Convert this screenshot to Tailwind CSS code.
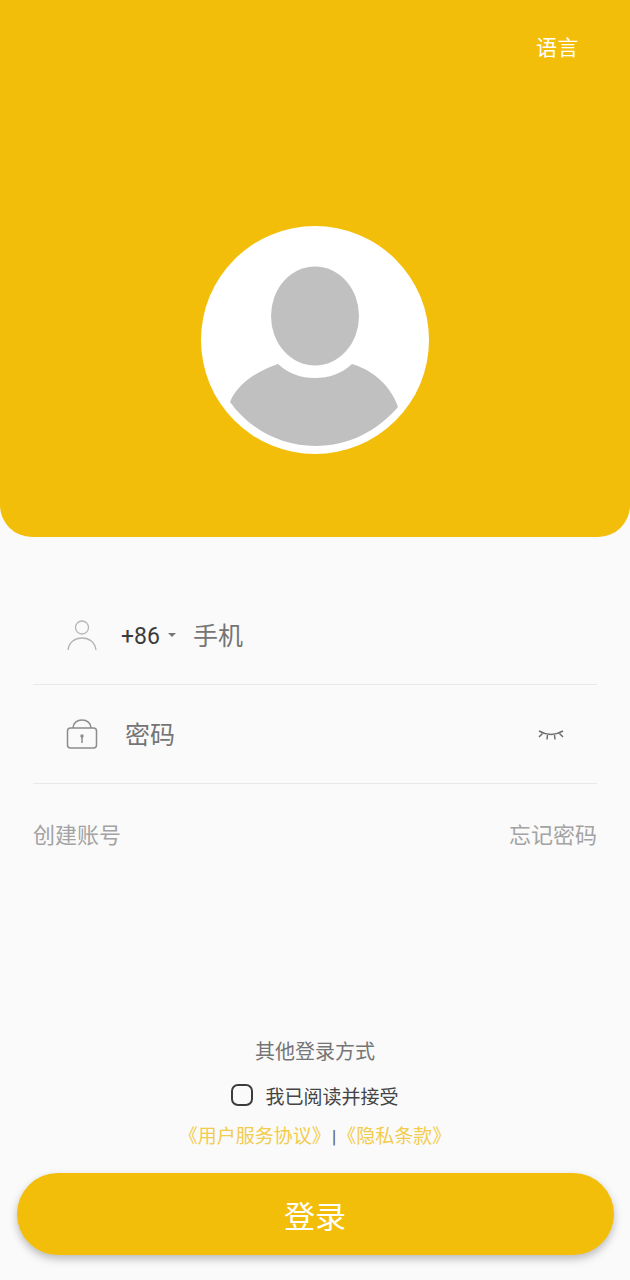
<!DOCTYPE html>
<html lang="zh-CN">
<head>
  <meta charset="UTF-8">
  <meta name="viewport" content="width=device-width, initial-scale=1.0">
  <title>登录</title>
  <script src="https://cdn.jsdelivr.net/npm/@tailwindcss/browser@4"></script>
</head>
<body class="bg-[#fafafa] font-['Roboto','Noto_Sans_CJK_SC',sans-serif]">
<div class="w-[630px] h-[1280px] overflow-hidden flex flex-col">
  <!-- 顶部 -->
  <header class="h-[537px] shrink-0 bg-[#f3be09] rounded-b-[32px] flex flex-col items-center">
    <div class="w-full flex justify-end pr-[51px] pt-[33px] h-[226px]">
      <span class="text-white text-[21px] leading-[30px] h-[30px] tracking-[0.5px]">语言</span>
    </div>
    <div class="w-[228px] h-[228px] rounded-full bg-white">
      <svg viewBox="0 0 228 228" class="w-full h-full" fill="#c0c0c0">
        <ellipse cx="114" cy="90" rx="44" ry="49.5"/>
        <path d="M29 176C36 158 56 145 77 138C88 148 100 152 114 152C128 152 140 148 151 138C172 144 190 160 197 181C176 205 148 220 114 220C82 220 50 205 29 176Z"/>
      </svg>
    </div>
  </header>

  <!-- 表单 -->
  <main class="px-[33px] pt-[50px]">
    <div class="h-[98px] border-b border-[#e8e8e8] flex items-center pb-[1px]">
      <svg viewBox="0 0 30 32" class="w-[30px] h-[32px] ml-[34px] fill-none stroke-[#b4b4b4]" stroke-width="1.3">
        <circle cx="15" cy="8.5" r="6.5"/>
        <path d="M1 31C2 23 8 19 15 19C22 19 28 23 29 31"/>
      </svg>
      <span class="ml-[24px] mt-[4px] text-[23px] text-[#3c3c3c]">+86</span>
      <span class="ml-[8px] w-0 h-0 border-x-[4px] border-x-transparent border-t-[4px] border-t-[#777777]"></span>
      <span class="ml-[17px] mt-[4px] text-[25px] text-[#757575]">手机</span>
    </div>
    <div class="h-[99px] border-b border-[#e8e8e8] flex items-center">
      <svg viewBox="0 0 32 32" class="w-[32px] h-[32px] ml-[33px] fill-none stroke-[#8c8c8c]" stroke-width="1.5">
        <rect x="1.5" y="10" width="29" height="20" rx="3"/>
        <path d="M7 10C7 5 11 2 16 2C21 2 25 5 25 10"/>
        <path d="M16 19V25"/>
        <circle cx="16" cy="18" r="1" fill="#8c8c8c"/>
      </svg>
      <span class="ml-[27px] mt-[3px] text-[25px] text-[#757575]">密码</span>
      <svg viewBox="0 0 26 12" class="w-[26px] h-[12px] ml-auto mr-[33px] mt-[1px] fill-none stroke-[#6e6e6e]" stroke-width="1.5">
        <path d="M1 2Q13 9 25 2"/>
        <path d="M4.5 4.5L1 8M9.5 6L9 10.5M16.5 6L17 10.5M21.5 4.5L25 8"/>
      </svg>
    </div>
    <div class="flex justify-between mt-[37px] text-[22px] leading-[30px] text-[#a3a3a3]">
      <span>创建账号</span>
      <span>忘记密码</span>
    </div>
  </main>

  <!-- 底部 -->
  <footer class="mt-[186px] flex flex-col items-center">
    <p class="text-[20px] leading-[30px] text-[#757575]">其他登录方式</p>
    <label class="mt-[15px] flex items-center h-[30px]">
      <span class="w-[22px] h-[22px] mb-[5px] border-2 border-[#3c3c3c] rounded-[7px]"></span>
      <span class="ml-[12px] pt-[2px] text-[19px] text-[#444444]">我已阅读并接受</span>
    </label>
    <p class="mt-[10px] text-[19px] leading-[30px] text-[#f2cc4c]">《用户服务协议》<span class="ml-[1px] text-[#666666]">|</span><span class="ml-[1px]">《隐私条款》</span></p>
    <button class="mt-[21px] w-[597px] h-[82px] pt-[8px] rounded-full bg-[#f3be09] text-white text-[31px] shadow-[0_4px_8px_rgba(0,0,0,0.25)]">登录</button>
  </footer>
</div>
</body>
</html>
